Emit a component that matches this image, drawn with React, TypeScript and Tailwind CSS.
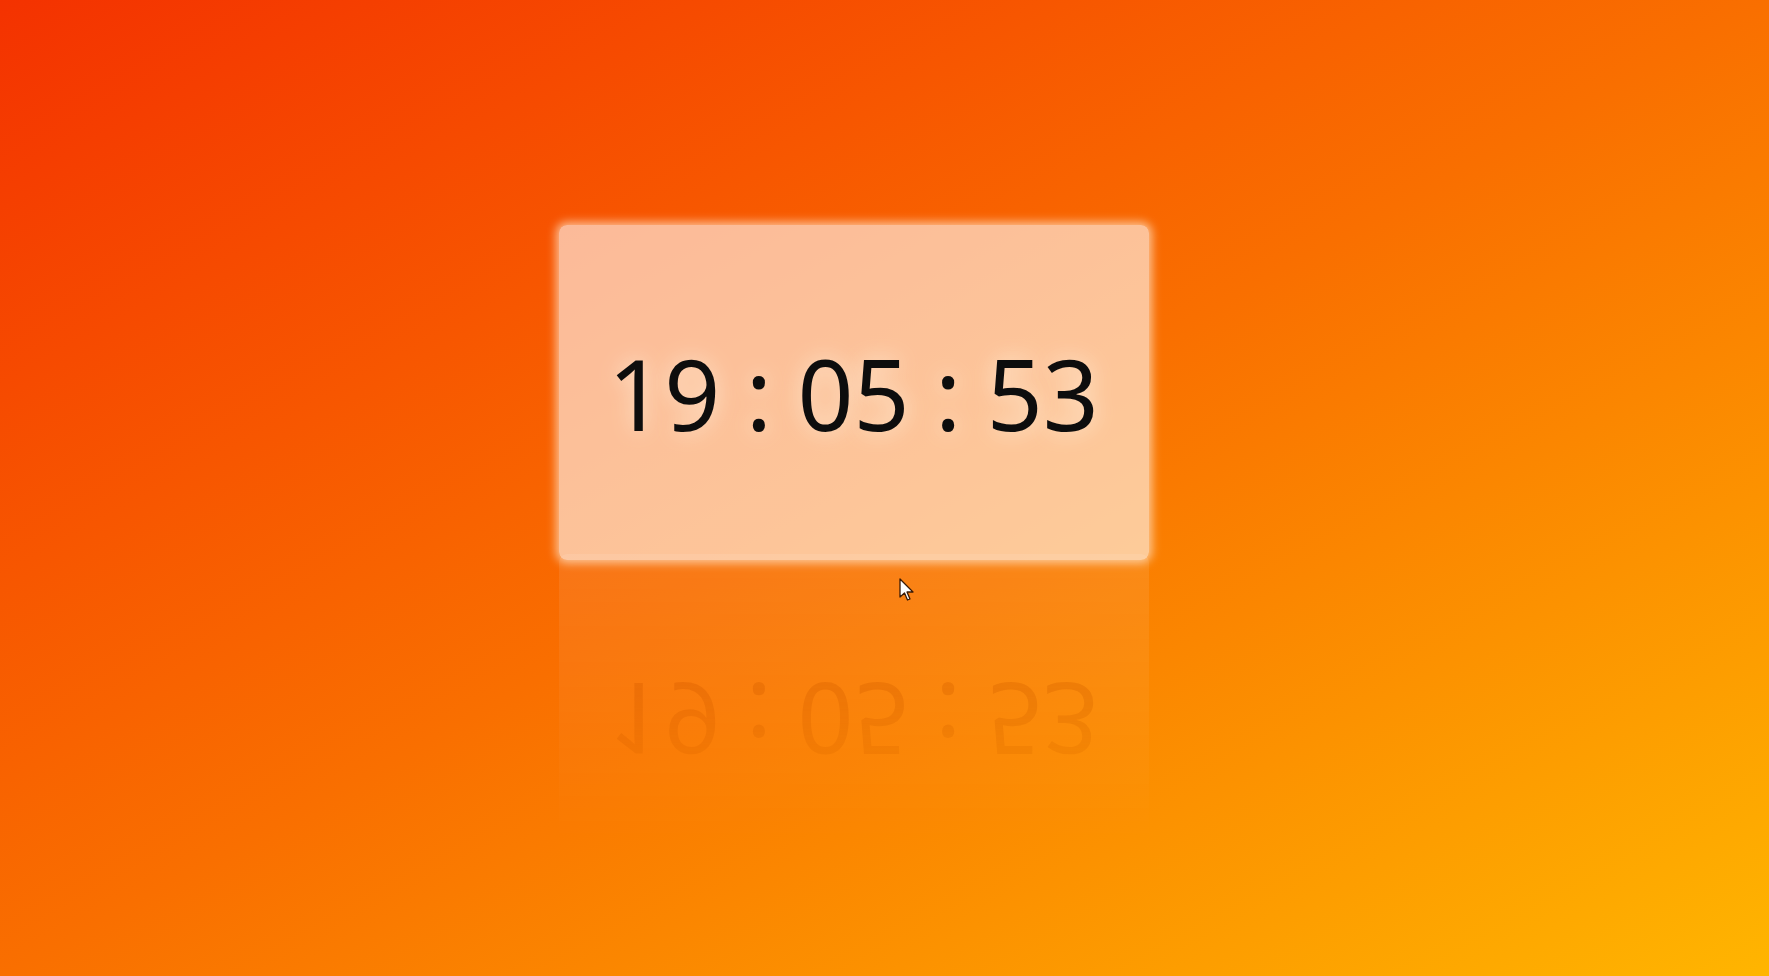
import { useEffect, useState } from "react";

const pad = (n: number) => String(n).padStart(2, "0");

function ClockFace({ time }: { time: string }) {
    return (
        <span className="text-[98px] leading-none text-[#0d0d0d] font-['Noto_Sans',sans-serif] tracking-normal [text-shadow:0_0_22px_rgba(255,236,215,0.95)]">
            {time}
        </span>
    );
}

export default function App() {
    // fixed at the time shown in the reference
    const [time] = useState({ h: 19, m: 5, s: 53 });

    useEffect(() => {
        document.body.style.margin = "0";
    }, []);

    const label = `${pad(time.h)} : ${pad(time.m)} : ${pad(time.s)}`;

    return (
        <div className="relative h-[976px] w-full overflow-hidden bg-[linear-gradient(to_bottom_right,#f43200,#f96f00_50%,#ffb500)]">
            <div className="flex flex-col items-center pt-[225px] pr-[62px]">
                <div className="flex h-[335px] w-[590px] items-center justify-center rounded-lg bg-white/60 shadow-[0_0_10px_3px_rgba(255,225,195,0.75)]">
                    <ClockFace time={label} />
                </div>
                <div className="mt-[-6px] flex h-[335px] w-[590px] -scale-y-100 items-center justify-center rounded-lg bg-white/10 opacity-100 [mask-image:linear-gradient(to_bottom,transparent_15%,rgba(0,0,0,0.9)_100%)]">
                    <span className="text-[98px] leading-none text-[#b84a00]/40 font-['Noto_Sans',sans-serif] blur-[0.6px]">
                        {label}
                    </span>
                </div>
            </div>
            {/* mouse pointer from the capture */}
            <svg
                className="absolute left-[899px] top-[578px]"
                width="17"
                height="26"
                viewBox="0 0 17 26"
            >
                <path
                    d="M1 1 L1 19 L5.5 15 L8.5 22 L11 21 L8 14 L14 14 Z"
                    fill="#ffffff"
                    stroke="#3a1a05"
                    strokeWidth="1.3"
                    strokeLinejoin="round"
                />
            </svg>
        </div>
    );
}
